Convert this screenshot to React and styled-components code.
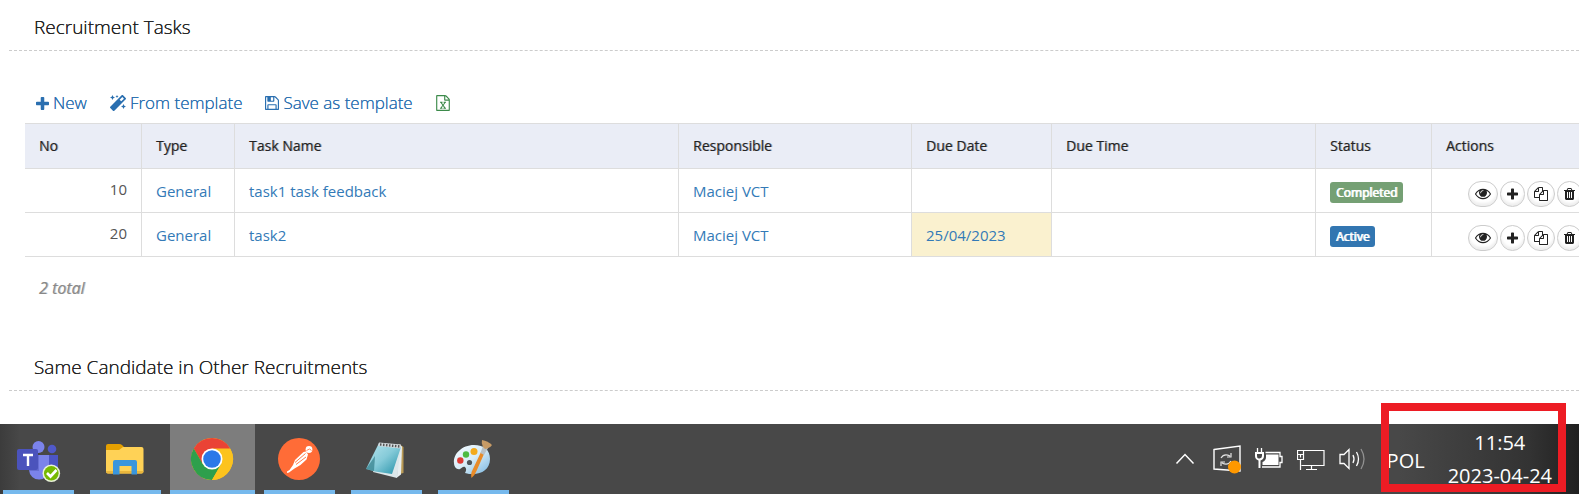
import React from "react";
import styled, { createGlobalStyle, css } from "styled-components";
import { FaMagic } from "react-icons/fa";

const GlobalStyle = createGlobalStyle`
  *, *::before, *::after { box-sizing: border-box; }
  body { margin: 0; background: #fff; color: #333; font-family: "Open Sans", "Noto Sans", sans-serif; overflow: hidden; }
  button { font: inherit; margin: 0; cursor: pointer; }
`;

const PATHS = {
  plus: "M1600 736v192q0 40-28 68t-68 28h-416v416q0 40-28 68t-68 28h-192q-40 0-68-28t-28-68v-416h-416q-40 0-68-28t-28-68v-192q0-40 28-68t68-28h416v-416q0-40 28-68t68-28h192q40 0 68 28t28 68v416h416q40 0 68 28t28 68z",
  save: "M512 1536h768v-384h-768v384zm896 0h128v-896q0-14-10-38.5t-20-34.5l-281-281q-10-10-34-20t-39-10v416q0 40-28 68t-68 28h-576q-40 0-68-28t-28-68v-416h-128v1280h128v-416q0-40 28-68t68-28h832q40 0 68 28t28 68v416zm-384-928v-320q0-13-9.5-22.5t-22.5-9.5h-192q-13 0-22.5 9.5t-9.5 22.5v320q0 13 9.5 22.5t22.5 9.5h192q13 0 22.5-9.5t9.5-22.5zm640 32v928q0 40-28 68t-68 28h-1344q-40 0-68-28t-28-68v-1344q0-40 28-68t68-28h928q40 0 88 20t76 48l280 280q28 28 48 76t20 88z",
  excel: "M1596 380q28 28 48 76t20 88v1152q0 40-28 68t-68 28h-1344q-40 0-68-28t-28-68v-1600q0-40 28-68t68-28h896q40 0 88 20t76 48zm-444-244v376h376q-10-29-22-41l-313-313q-12-12-41-22zm384 1528v-1024h-416q-40 0-68-28t-28-68v-416h-768v1536h1280zm-979-234v106h281v-106h-75l103-161q5-7 10-16.5t7.5-13.5 3.5-4h2q1 4 5 10 2 4 4.5 7.5t6 8 6.5 8.5l107 161h-76v106h291v-106h-68l-192-273 195-282h67v-107h-279v107h74l-103 159q-4 7-10 16.5t-9 13.5l-2 3h-2q-1-4-5-10-6-11-17-23l-106-159h76v-107h-290v107h68l189 272-194 283h-68z",
  eye: "M1664 960q-152-236-381-353 61 104 61 225 0 185-131.5 316.5t-316.5 131.5-316.5-131.5-131.5-316.5q0-121 61-225-229 117-381 353 133 205 333.5 326.5t434.5 121.5 434.5-121.5 333.5-326.5zm-720-384q0-20-14-34t-34-14q-125 0-214.5 89.5t-89.5 214.5q0 20 14 34t34 14 34-14 14-34q0-86 61-147t147-61q20 0 34-14t14-34zm848 384q0 34-20 69-140 230-376.5 368.5t-499.5 138.5-499.5-139-376.5-368q-20-35-20-69t20-69q140-229 376.5-368t499.5-139 499.5 139 376.5 368q20 35 20 69z",
  copy: "M1696 384q40 0 68 28t28 68v1216q0 40-28 68t-68 28h-960q-40 0-68-28t-28-68v-288h-544q-40 0-68-28t-28-68v-672q0-40 20-88t48-76l408-408q28-28 76-48t88-20h416q40 0 68 28t28 68v328q68-40 128-40h416zm-544 213l-299 299h299v-299zm-640-384l-299 299h299v-299zm196 647l316-316v-416h-384v416q0 40-28 68t-68 28h-416v640h512v-256q0-40 20-88t48-76zm956 804v-1152h-384v416q0 40-28 68t-68 28h-416v640h896z",
  trash: "M704 1376v-704q0-14-9-23t-23-9h-64q-14 0-23 9t-9 23v704q0 14 9 23t23 9h64q14 0 23-9t9-23zm256 0v-704q0-14-9-23t-23-9h-64q-14 0-23 9t-9 23v704q0 14 9 23t23 9h64q14 0 23-9t9-23zm256 0v-704q0-14-9-23t-23-9h-64q-14 0-23 9t-9 23v704q0 14 9 23t23 9h64q14 0 23-9t9-23zm-544-992h448l-48-117q-7-9-17-11h-317q-10 2-17 11zm928 32v64q0 14-9 23t-23 9h-96v948q0 83-47 143.5t-113 60.5h-832q-66 0-113-58.5t-47-141.5v-952h-96q-14 0-23-9t-9-23v-64q0-14 9-23t23-9h309l70-167q15-37 54-63t79-26h320q40 0 79 26t54 63l70 167h309q14 0 23 9t9 23z",
};
const BOXES = {
  plus: "192 128 1408 1408",
  save: "128 128 1536 1536",
  excel: "128 0 1536 1792",
  eye: "0 192 1792 1536",
  copy: "0 0 1792 1792",
  trash: "192 128 1408 1536",
};

const Glyph = ({ name, width, height }) => (
  <svg width={width} height={height} viewBox={BOXES[name]} fill="currentColor" aria-hidden="true">
    <path d={PATHS[name]} />
  </svg>
);

const Page = styled.div`
  display: flex;
  flex-direction: column;
  position: relative;
`;

const Content = styled.main`
  padding: 0 0 33px 9px;
  overflow: hidden;
`;

const SectionTitle = styled.h2`
  margin: 0;
  padding: 14px 25px 9px;
  border-bottom: 1px dashed #ccc;
  font-size: 19px;
  line-height: 27px;
  font-weight: 300;
  color: #222;
  text-shadow: 0 0 currentColor;
`;

const Panel = styled.section`
  padding: 40px 0 41px 16px;
`;

const Toolbar = styled.div`
  display: flex;
  align-items: center;
  gap: 23px;
  padding: 0 11px;
  margin-bottom: 8px;
`;

const ToolButton = styled.button`
  display: flex;
  align-items: center;
  gap: 4px;
  padding: 0;
  border: 0;
  background: none;
  font-size: 17px;
  font-weight: 300;
  line-height: 24px;
  color: ${(p) => (p.$green ? "#3c8a4a" : "#2a6fb0")};
  text-shadow: 0 0 currentColor;
`;

const Table = styled.table`
  width: calc(100% + 32px);
  table-layout: fixed;
  border-collapse: separate;
  border-spacing: 0;
  font-size: 15px;
  line-height: 22px;
`;

const Col = styled.col`
  width: ${(p) => (p.$w ? `${p.$w}px` : "auto")};
`;

const cell = css`
  border: solid #ddd;
  border-width: 0 1px 1px 0;
  text-align: left;
`;

const HeadCell = styled.th`
  ${cell}
  border-top-width: 1px;
  height: 46px;
  padding: 0 14px;
  background: #eaedf6;
  font-size: 14px;
  font-weight: 500;
  color: #222;
  text-shadow: 1px 0 rgba(34, 34, 34, 0.4);
`;

const Cell = styled.td`
  ${cell}
  height: 44px;
  padding: 11px 14px 0;
  vertical-align: top;
  background: ${(p) => (p.$due ? "#faf1cf" : "transparent")};
`;

const NumberCell = styled(Cell)`
  padding-top: 9px;
  text-align: right;
  color: #555;
`;

const CellLink = styled.a`
  color: #337ab7;
  text-decoration: none;
`;

const Badge = styled.span`
  display: block;
  width: fit-content;
  margin-top: 2px;
  padding: 0 6px;
  border-radius: 3px;
  background: ${(p) => (p.$done ? "#75a074" : "#3276b1")};
  color: #fff;
  font-size: 12px;
  line-height: 21px;
  font-weight: 400;
  text-shadow: 1px 0 rgba(255, 255, 255, 0.8), 0 0 currentColor;
`;

const ActionCell = styled(Cell)`
  padding: 12px 14px 0 36px;
`;

const Actions = styled.div`
  display: flex;
  gap: 2px;
`;

const ActionButton = styled.button`
  display: flex;
  align-items: center;
  flex: none;
  height: 26px;
  padding: 0 6px;
  border: 1px solid #ccc;
  border-radius: 13px;
  background: #fff;
  box-shadow: inset 0 -3px 3px #eee;
  color: #222;
`;

const Total = styled.p`
  margin: 0;
  padding: 20px 14px 0;
  font-size: 16px;
  line-height: 22px;
  font-style: italic;
  font-weight: 400;
  color: #888;
  text-shadow: 1px 0 rgba(136, 136, 136, 0.5);
`;

const Taskbar = styled.footer`
  display: flex;
  justify-content: space-between;
  height: 70px;
  background: linear-gradient(90deg, #3c3c3c 0, #484848 20px, #484848 calc(100% - 180px), #333 calc(100% - 50px), #202020 100%);
  color: #fff;
`;

const Apps = styled.nav`
  display: flex;
  gap: 2px;
  margin-left: -4px;
`;

const AppButton = styled.button`
  display: flex;
  flex-direction: column;
  align-items: center;
  width: 85px;
  height: 70px;
  padding: ${(p) => (p.$active ? "0" : "0 7px")};
  border: 0;
  background: ${(p) => (p.$active ? "#7d7d7d" : "transparent")};

  &::after {
    content: "";
    width: 100%;
    height: 4px;
    background: #76b9ed;
  }
`;

const AppIcon = styled.svg`
  display: block;
  width: 48px;
  height: 48px;
  margin: 11px 1px 7px 0;
`;

const Tray = styled.div`
  display: flex;
  align-items: center;
  gap: 14px;
  padding-right: 27px;
  font-size: 20px;
  line-height: 33px;
`;

const TrayButton = styled.button`
  display: flex;
  padding: 0;
  border: 0;
  background: none;
  color: inherit;
`;

const Language = styled(TrayButton)`
  margin: 3px 9px 0 6px;
`;

const Clock = styled.time`
  display: flex;
  flex-direction: column;
  align-items: center;
`;

const Marker = styled.div`
  position: absolute;
  right: 13px;
  bottom: 2px;
  width: 185px;
  height: 89px;
  border: 8px solid #ed1c24;
  pointer-events: none;
`;

const COLUMNS = [
  ["No", 117],
  ["Type", 93],
  ["Task Name", 0],
  ["Responsible", 233],
  ["Due Date", 140],
  ["Due Time", 264],
  ["Status", 116],
  ["Actions", 179],
];

const TASKS = [
  { no: 10, type: "General", name: "task1 task feedback", who: "Maciej VCT", date: "", status: "Completed" },
  { no: 20, type: "General", name: "task2", who: "Maciej VCT", date: "25/04/2023", status: "Active" },
];

const ACTIONS = [
  ["View", "eye", 16],
  ["Add", "plus", 11],
  ["Copy", "copy", 14],
  ["Delete", "trash", 11],
];

const Teams = () => (
  <AppIcon viewBox="0 0 48 48">
    <circle cx="38" cy="14" r="4.3" fill="#5059c9" />
    <path d="M31 20h13v13a8 8 0 0 1-13 5z" fill="#4c55c4" />
    <circle cx="24.500" cy="12" r="6" fill="#7b83eb" />
    <path d="M15 20h20v14a10 10 0 0 1-20 1z" fill="#7b83eb" />
    <path d="M15 20h10v16H15z" fill="#5a62c3" opacity=".6" />
    <rect x="3" y="14" width="21" height="21" rx="2" fill="#4b53bc" />
    <path d="M9 20h10M14 20v11" stroke="#fff" strokeWidth="2.400" />
    <circle cx="37.300" cy="38.300" r="8.800" fill="#e9f2d8" />
    <circle cx="37.300" cy="38.300" r="7.300" fill="#76b900" />
    <path d="M33 38l3.500 3.500 6-6.500" fill="none" stroke="#fff" strokeWidth="2.600" />
  </AppIcon>
);

const Folder = () => (
  <AppIcon viewBox="0 0 48 48">
    <path d="M5 11q0-2 2-2h11q2 0 3 1l3 3H42v8H5z" fill="#e5a000" />
    <path d="M5 15h13l4-3h18.500q2 0 2 2v22.500q0 2-2 2H7q-2 0-2-2z" fill="#ffd256" />
    <path d="M5 36h37.500q0 2.500-2 2.500H7q-2 0-2-2.500z" fill="#eab63c" />
    <path d="M12 39.500V27q0-2 2-2h20q2 0 2 2v12.500h-5.500V31h-12v8.500z" fill="#3a96dd" />
  </AppIcon>
);

const Chrome = () => (
  <AppIcon viewBox="0 0 48 48">
    <circle cx="24" cy="24" r="21" fill="#fcc31e" />
    <path d="M24 24L42.200 13.500A21 21 0 0 0 5.800 13.500L14 28z" fill="#ea4335" />
    <path d="M5.800 13.500A21 21 0 0 0 24 45L33.100 29.300 14.900 29.300z" fill="#2e9f4c" />
    <path d="M24 13.500h18.200A21 21 0 0 1 24 45l9.100-15.700z" fill="#fcc31e" />
    <circle cx="24" cy="24" r="10.500" fill="#fff" />
    <circle cx="24" cy="24" r="8.800" fill="#2b78e8" />
  </AppIcon>
);

const Postman = () => (
  <AppIcon viewBox="0 0 48 48">
    <circle cx="24" cy="24" r="21" fill="#ff6c37" />
    <circle cx="34" cy="14.500" r="3.400" fill="#fff" />
    <path d="M31.500 15.500l3-1.500 2 1.500" fill="none" stroke="#ff6c37" strokeWidth=".8" />
    <path d="M28.500 17l2.500-.5 2 3-1.500 5-6 5.500-6 3.500-5.500 4-2 .5v-1.500l2.500-1.500 3.500-5 2-5z" fill="#fff" />
    <path d="M30.500 18.500l-10.500 9M31 22l-10 7.500" stroke="#ff6c37" strokeWidth=".9" />
  </AppIcon>
);

const Notepad = () => (
  <AppIcon viewBox="1 0 48 48">
    <defs>
      <linearGradient id="note" x1="0" y1="0" x2="1" y2="1">
        <stop offset="0" stopColor="#b9e5ee" />
        <stop offset=".5" stopColor="#86cbd9" />
        <stop offset="1" stopColor="#218fa6" />
      </linearGradient>
    </defs>
    <path d="M38 9l4.500 3v26l-4 1z" fill="#b99a55" />
    <path d="M37 9.500l4 2-1 28-4 3z" fill="#e8eef0" />
    <path d="M19 9L40 12 36 43 12 37z" fill="#dce7ea" />
    <path d="M18 8L5 34l9 2.500 17 2.500L40 12z" fill="url(#note)" />
    <path d="M14 21L5 34l8 2z" fill="#236f7c" opacity=".6" />
    <path d="M18 7.500l22 2-.5 4L17 11z" fill="#d4dadd" />
    <path d="M19 9.500l20 2" stroke="#555" strokeWidth="2.400" strokeDasharray="1.500 1.500" />
  </AppIcon>
);

const Paint = () => (
  <AppIcon viewBox="2 0 48 48">
    <defs>
      <linearGradient id="palette" x1="0" y1="0" x2="1" y2="1">
        <stop offset="0" stopColor="#f5fbff" />
        <stop offset=".5" stopColor="#d7ecf8" />
        <stop offset="1" stopColor="#78b5df" />
      </linearGradient>
    </defs>
    <path d="M27 10c10 0 16 5 16 14 0 10-8 15-17 15-3 0-5 0-8-1 1-2 2-4 0-6-2-1-3 1-5 2-3 1-6-2-6-6C6 19 15 10 27 10z" fill="url(#palette)" />
    <circle cx="22.500" cy="27.500" r="2.600" fill="#4d555b" />
    <circle cx="13.300" cy="25.500" r="3.200" fill="#df3b35" />
    <circle cx="19" cy="19.500" r="3.200" fill="#4dbb43" />
    <circle cx="27" cy="16.500" r="3.500" fill="#f3aa1d" />
    <path d="M34 17l3 2-7.500 17q-2 5-5 7-1-5 1-8z" fill="#e88b29" />
    <path d="M36 11l-2.500 7 3.500 2 4-7z" fill="#b9c1c6" />
    <path d="M36 12q-2-4-1-7 6 1 10 5-2 3-7 4z" fill="#c79b66" />
  </AppIcon>
);

const APPS = [
  ["Teams", Teams],
  ["File Explorer", Folder],
  ["Chrome", Chrome],
  ["Postman", Postman],
  ["Notepad", Notepad],
  ["Paint", Paint],
];

const line = { fill: "none", stroke: "currentColor" };

const Chevron = () => (
  <svg width="28" height="28" viewBox="0 0 28 28">
    <path d="M5.500 18.500l8.500-9 8.500 9" {...line} strokeWidth="1.500" />
  </svg>
);

const Update = () => (
  <svg width="28" height="30" viewBox="0 0 28 30">
    <path d="M1 5.500L27 2v25L1 25z" {...line} strokeWidth="1.400" />
    <path d="M8 14q3-5 9-2m1-3v4h-4M18 17q-3 5-9 2m-1 3v-4h4" {...line} strokeWidth="1.200" opacity=".85" />
    <circle cx="21.500" cy="23" r="6.500" fill="#ff9800" />
  </svg>
);

const Battery = () => (
  <svg width="28" height="28" viewBox="0 0 28 28">
    <path d="M2.500 3v5M6.500 3v5" {...line} strokeWidth="1.300" />
    <path d="M0 7h9v4q0 3-3.500 4.500V23h-2v-7.500Q0 14 0 11z" fill="currentColor" />
    <path d="M2 9h5v2q0 2-2.500 2.500T2 11z" fill="#484848" />
    <path d="M10.500 7.500H25v4h2v6h-2v4.500H7" {...line} strokeWidth="1.300" />
    <path d="M11 9.500h12.500v10.500H7.500V17q3.500-1.500 3.500-5z" fill="currentColor" />
  </svg>
);

const Network = () => (
  <svg width="28" height="28" viewBox="0 0 28 28">
    <path d="M7 5.500h20v15H4.500M14.500 20.500v4M9 24.500h11M.5 5.500h6v9h-6zM.5 9.500h6M3.500 9.500v3M3.500 14.500V25" {...line} strokeWidth="1.200" />
  </svg>
);

const Volume = () => (
  <svg width="28" height="28" viewBox="0 0 28 28">
    <path d="M1 9.500h4l5-5v19l-5-5H1zM14 10q2 4 0 8M17.500 7q4 7 0 14" {...line} strokeWidth="1.300" />
    <path d="M22 4q6 10 0 20" {...line} strokeWidth="1.300" opacity=".4" />
  </svg>
);

const TRAY = [
  ["Show hidden icons", Chevron],
  ["Updates", Update],
  ["Battery", Battery],
  ["Network", Network],
  ["Volume", Volume],
];

export default function App() {
  return (
    <Page>
      <GlobalStyle />
      <Content>
        <SectionTitle>Recruitment Tasks</SectionTitle>
        <Panel>
          <Toolbar>
            <ToolButton><Glyph name="plus" width={13} height={13} />New</ToolButton>
            <ToolButton><FaMagic size={16} />From template</ToolButton>
            <ToolButton><Glyph name="save" width={14} height={14} />Save as template</ToolButton>
            <ToolButton $green aria-label="Export to Excel"><Glyph name="excel" width={14} height={16} /></ToolButton>
          </Toolbar>
          <Table>
            <colgroup>{COLUMNS.map(([label, w]) => <Col key={label} $w={w} />)}</colgroup>
            <thead>
              <tr>{COLUMNS.map(([label]) => <HeadCell key={label} scope="col">{label}</HeadCell>)}</tr>
            </thead>
            <tbody>
              {TASKS.map((t) => (
                <tr key={t.no}>
                  <NumberCell>{t.no}</NumberCell>
                  <Cell><CellLink href="#type">{t.type}</CellLink></Cell>
                  <Cell><CellLink href="#task">{t.name}</CellLink></Cell>
                  <Cell><CellLink href="#responsible">{t.who}</CellLink></Cell>
                  <Cell $due={!!t.date}>{t.date && <CellLink href="#date">{t.date}</CellLink>}</Cell>
                  <Cell />
                  <Cell><Badge $done={t.status === "Completed"}>{t.status}</Badge></Cell>
                  <ActionCell>
                    <Actions>
                      {ACTIONS.map(([label, icon, w]) => (
                        <ActionButton key={icon} aria-label={label}><Glyph name={icon} width={w} height={14} /></ActionButton>
                      ))}
                    </Actions>
                  </ActionCell>
                </tr>
              ))}
            </tbody>
          </Table>
          <Total>2 total</Total>
        </Panel>
        <SectionTitle>Same Candidate in Other Recruitments</SectionTitle>
      </Content>
      <Taskbar>
        <Apps>
          {APPS.map(([label, Icon]) => (
            <AppButton key={label} aria-label={label} $active={label === "Chrome"}><Icon /></AppButton>
          ))}
        </Apps>
        <Tray>
          {TRAY.map(([label, Icon]) => (
            <TrayButton key={label} aria-label={label}><Icon /></TrayButton>
          ))}
          <Language>POL</Language>
          <Clock>
            <span>11:54</span>
            <span>2023-04-24</span>
          </Clock>
        </Tray>
      </Taskbar>
      <Marker />
    </Page>
  );
}
